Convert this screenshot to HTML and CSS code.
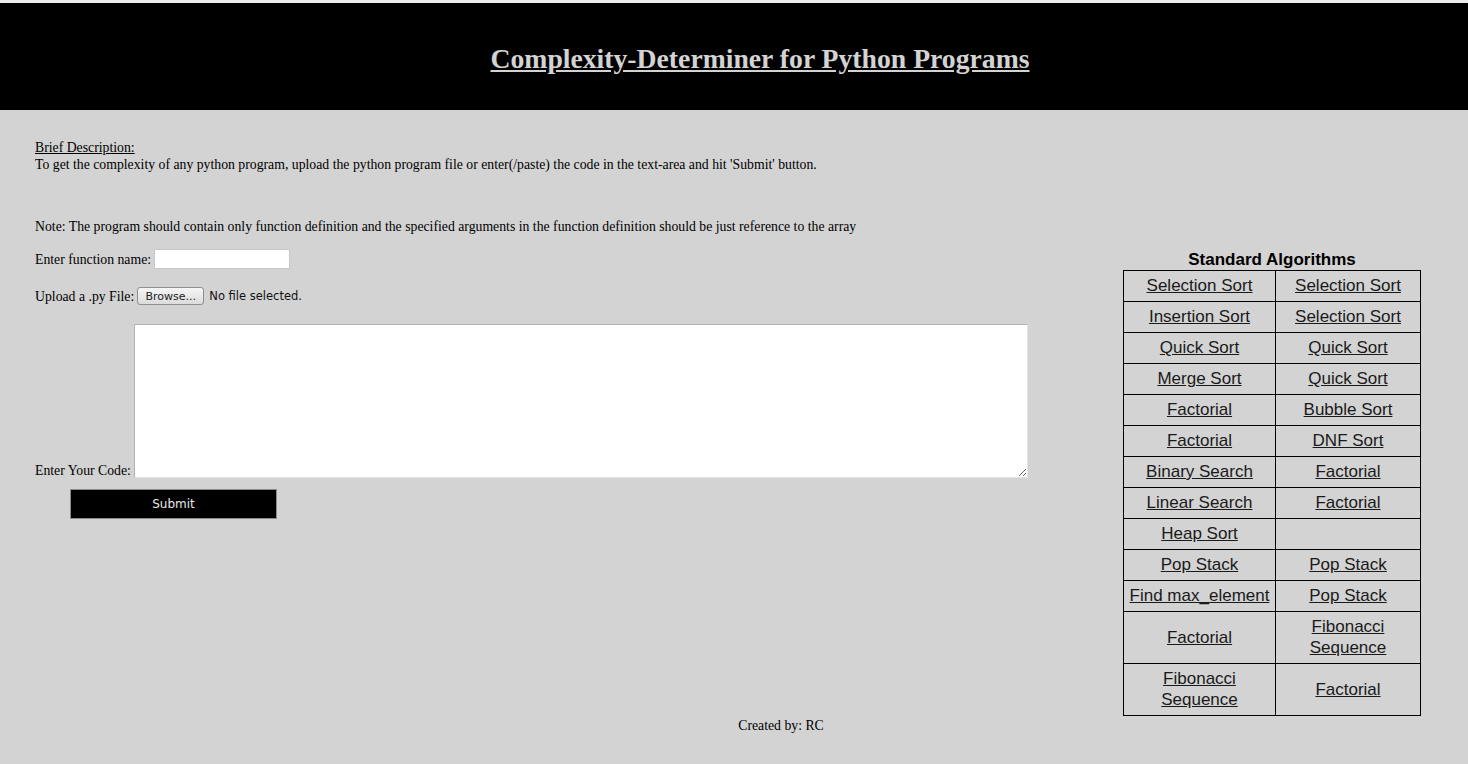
FILE: index.html
```html
<!DOCTYPE html>
<html>
<head>
<meta charset="utf-8">
<title>Complexity-Determiner</title>
<link rel="stylesheet" href="styles.css">
</head>
<body>
<header class="top">
  <h1 class="title"><a href="#">Complexity-Determiner for Python Programs</a></h1>
</header>
<main class="main">
  <section class="left">
    <p class="desc"><span class="u">Brief Description:</span><br>To get the complexity of any python program, upload the python program file or enter(/paste) the code in the text-area and hit 'Submit' button.</p>
    <p class="note">Note: The program should contain only function definition and the specified arguments in the function definition should be just reference to the array</p>
    <div class="row fn">
      <label>Enter function name:</label>
      <input class="fname" type="text">
    </div>
    <div class="row up">
      <label>Upload a .py File:</label>
      <button class="browse" type="button">Browse...</button>
      <span class="nofile">No file selected.</span>
    </div>
    <div class="row code">
      <label>Enter Your Code:</label>
      <textarea class="codebox"></textarea>
    </div>
    <button class="submit" type="button">Submit</button>
  </section>
  <aside class="right">
    <h2 class="algo-title">Standard Algorithms</h2>
    <table class="algos">
      <tr><td><a href="#">Selection Sort</a></td><td><a href="#">Selection Sort</a></td></tr>
      <tr><td><a href="#">Insertion Sort</a></td><td><a href="#">Selection Sort</a></td></tr>
      <tr><td><a href="#">Quick Sort</a></td><td><a href="#">Quick Sort</a></td></tr>
      <tr><td><a href="#">Merge Sort</a></td><td><a href="#">Quick Sort</a></td></tr>
      <tr><td><a href="#">Factorial</a></td><td><a href="#">Bubble Sort</a></td></tr>
      <tr><td><a href="#">Factorial</a></td><td><a href="#">DNF Sort</a></td></tr>
      <tr><td><a href="#">Binary Search</a></td><td><a href="#">Factorial</a></td></tr>
      <tr><td><a href="#">Linear Search</a></td><td><a href="#">Factorial</a></td></tr>
      <tr><td><a href="#">Heap Sort</a></td><td></td></tr>
      <tr><td><a href="#">Pop Stack</a></td><td><a href="#">Pop Stack</a></td></tr>
      <tr><td><a href="#">Find max_element</a></td><td><a href="#">Pop Stack</a></td></tr>
      <tr><td><a href="#">Factorial</a></td><td><a href="#">Fibonacci<br>Sequence</a></td></tr>
      <tr><td><a href="#">Fibonacci<br>Sequence</a></td><td><a href="#">Factorial</a></td></tr>
    </table>
  </aside>
</main>
<footer class="foot">Created by: RC</footer>
</body>
</html>
```

FILE: styles.css
```css
html, body {
  margin: 0;
  padding: 0;
}
body {
  background: #d3d3d3;
  font-family: "Liberation Serif", "Times New Roman", serif;
  font-size: 13.75px;
  color: #000;
  min-height: 764px;
}
.top {
  border-top: 3px solid #ececec;
  background: #000;
  height: 102px;
  padding-top: 5px;
  display: flex;
  align-items: center;
  justify-content: center;
  padding-left: 52px;
}
.title {
  margin: 0;
  font-size: 27.7px;
  font-weight: bold;
  line-height: 32px;
}
.title a {
  color: #d3d3d3;
  text-decoration: underline;
}
.main {
  display: flex;
  padding-left: 35px;
}
.left {
  width: 993px;
  padding-top: 29px;
}
.desc, .note {
  margin: 0;
  line-height: 17px;
}
.u {
  text-decoration: underline;
}
.note {
  margin-top: 45px;
}
.row {
  display: flex;
  align-items: center;
  line-height: 17px;
}
.fn {
  margin-top: 14px;
}
.fname {
  margin: 0 0 0 3px;
  width: 136px;
  height: 20px;
  box-sizing: border-box;
  border: 1px solid #c8c8c8;
  background: #fff;
  padding: 0 2px;
}
.up {
  margin-top: 18px;
}
.browse {
  margin: 0 0 0 3px;
  width: 67px;
  height: 18px;
  box-sizing: border-box;
  padding: 0;
  font-family: "DejaVu Sans", "Noto Sans", sans-serif;
  font-size: 11px;
  color: #222;
  background: linear-gradient(#f6f6f6, #dcdcdc);
  border: 1px solid #8f8f8f;
  border-radius: 3px;
}
.nofile {
  margin-left: 5px;
  font-family: "DejaVu Sans", "Noto Sans", sans-serif;
  font-size: 11.5px;
  color: #111;
}
.code {
  margin-top: 19px;
  align-items: flex-end;
}
.code label {
  margin-bottom: -1px;
}
.codebox {
  margin: 0 0 0 3px;
  width: 894px;
  height: 154px;
  box-sizing: border-box;
  border: 1px solid #b4b4b4;
  border-right-color: #e4e4e4;
  border-bottom-color: #e4e4e4;
  background: #fff;
  padding: 2px;
  resize: both;
}
.submit {
  display: block;
  margin: 11px 0 0 35px;
  width: 207px;
  height: 30px;
  box-sizing: border-box;
  background: #000;
  color: #e8e8e8;
  border: 1px solid #8a8a8a;
  font-family: "DejaVu Sans", "Noto Sans", sans-serif;
  font-size: 12px;
  padding: 0;
}
.right {
  margin-left: 95px;
  padding-top: 139px;
  width: 298px;
}
.algo-title {
  margin: 0;
  text-align: center;
  font-family: "Liberation Sans", Arial, sans-serif;
  font-size: 17px;
  font-weight: bold;
  line-height: 21px;
}
.algos {
  border-collapse: collapse;
  width: 298px;
  font-family: "Liberation Sans", Arial, sans-serif;
  font-size: 17px;
}
.algos td {
  border: 1px solid #000;
  text-align: center;
  vertical-align: middle;
  line-height: 21px;
  padding: 4px 2px 5px;
  height: 21px;
}
.algos td:first-child {
  width: 147px;
}
.algos a {
  color: #1a1a1a;
  text-decoration: underline;
}
.foot {
  text-align: center;
  padding-left: 94px;
  line-height: 17px;
  margin-top: 1px;
}
```
